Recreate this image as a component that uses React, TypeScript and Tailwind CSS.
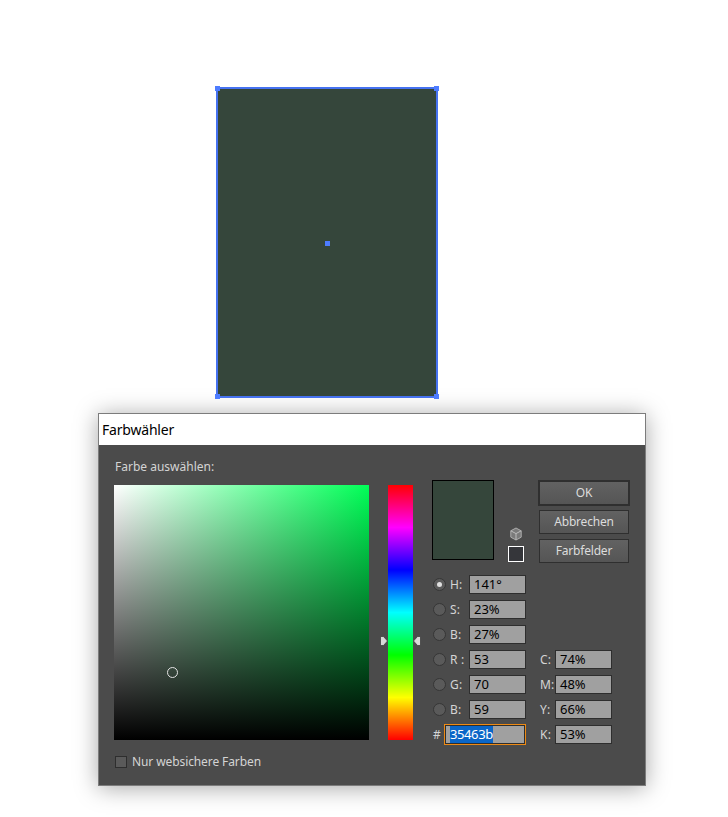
const uiFont = "[font-family:'Noto_Sans',sans-serif]"

function Handle({ className }: { className: string }) {
  return <div className={`absolute w-[5px] h-[5px] bg-[#4d7cff] ${className}`} />
}

function Artboard() {
  return (
    <div className="relative ml-[216px] w-[222px] h-[311px] bg-[#35463b] border-2 border-[#4672f0]">
      <Handle className="-left-[3px] -top-[3px]" />
      <Handle className="-right-[3px] -top-[3px]" />
      <Handle className="-left-[3px] -bottom-[3px]" />
      <Handle className="-right-[3px] -bottom-[3px]" />
      <Handle className="left-[107px] top-[152px]" />
    </div>
  )
}

function Radio({ checked }: { checked?: boolean }) {
  return (
    <div className="flex items-center justify-center w-[13px] h-[13px] rounded-full bg-[#5a5a5a] border border-[#363636]">
      {checked && <div className="w-[5px] h-[5px] rounded-full bg-[#e0e0e0]" />}
    </div>
  )
}

function Field({ value }: { value: string }) {
  return (
    <div className="w-[57px] h-[19px] pl-[4px] bg-[#a0a0a0] border border-[#2e2e2e] text-[13px] leading-[17px] text-black">
      {value}
    </div>
  )
}

function RadioRow({ label, value, checked }: { label: string; value: string; checked?: boolean }) {
  return (
    <div className="flex items-center h-[19px]">
      <div className="w-[18px] flex pl-px">
        <Radio checked={checked} />
      </div>
      <div className="w-[19px] text-[12px] tracking-[0.2px] text-[#d4d4d4] whitespace-pre">{label}</div>
      <Field value={value} />
    </div>
  )
}

function CmykRow({ label, value }: { label: string; value: string }) {
  return (
    <div className="flex items-center h-[19px]">
      <div className="w-[15px] text-[12px] tracking-[0.2px] text-[#d4d4d4]">{label}</div>
      <Field value={value} />
    </div>
  )
}

function HexRow() {
  return (
    <div className="flex items-start h-[21px] -mt-[1px]">
      <div className="w-[13px] pl-px text-[12px] leading-[21px] text-[#d4d4d4]">#</div>
      <div className="shrink-0 w-[82px] h-[21px] p-px bg-[#ee8a14]">
        <div className="h-[19px] pl-[4px] bg-[#a0a0a0] border border-[#2e2e2e]">
          <span className="block w-fit bg-[#0a66c8] text-white text-[13px] tracking-[-0.4px] leading-[17px]">35463b</span>
        </div>
      </div>
    </div>
  )
}

function DialogButton({ label, primary }: { label: string; primary?: boolean }) {
  return (
    <div
      className={`flex items-center justify-center bg-gradient-to-b from-[#626262] to-[#555555] text-[12px] tracking-[-0.2px] text-[#dcdcdc] ${
        primary
          ? 'w-[92px] h-[26px] border-2 border-[#2f2f2f]'
          : 'w-[90px] h-[24px] mx-px border border-[#2f2f2f]'
      }`}
    >
      {label}
    </div>
  )
}

function CubeIcon() {
  return (
    <svg width="12" height="14" viewBox="0 0 12 14" fill="none">
      <path d="M6 1 11.2 3.8V10.2L6 13 .8 10.2V3.8Z" fill="#7a7a7a" stroke="#adadad" />
      <path d="M.8 3.8 6 6.6l5.2-2.8M6 6.6V13" stroke="#bcbcbc" />
    </svg>
  )
}

function ColorField() {
  return (
    <div className="relative w-[255px] h-[255px] bg-[linear-gradient(to_top,#000,rgba(0,0,0,0)),linear-gradient(to_right,#fff,#00ff57)]">
      <div className="absolute left-[53px] top-[182px] w-[11px] h-[11px] rounded-full border border-[#e4e4e4]" />
    </div>
  )
}

function HueBar() {
  return (
    <div className="relative ml-[19px] mt-[40px] w-[25px] h-[255px] bg-[linear-gradient(to_bottom,#f00,#f0f,#00f,#0ff,#0f0,#ff0,#f00)]">
      <svg className="absolute -left-[8px] top-[151px]" width="8" height="10" viewBox="0 0 8 10">
        <path d="M.5.5H3.5L7.5 5 3.5 9.5H.5Z" fill="#d8d8d8" stroke="#333" strokeWidth="0.7" />
      </svg>
      <svg className="absolute -right-[8px] top-[151px]" width="8" height="10" viewBox="0 0 8 10">
        <path d="M7.5.5H4.5L.5 5 4.5 9.5H7.5Z" fill="#d8d8d8" stroke="#333" strokeWidth="0.7" />
      </svg>
    </div>
  )
}

function Controls() {
  return (
    <div className="ml-[19px] mt-[35px] w-[198px]">
      <div className="flex h-[84px]">
        <div className="w-[62px] h-[80px] bg-[#35463b] border border-black" />
        <div className="ml-[14px] w-[16px] mt-[47px] flex flex-col items-center">
          <CubeIcon />
          <div className="mt-[5px] w-[16px] h-[16px] bg-[#35363a] border border-white" />
        </div>
        <div className="ml-[14px] flex flex-col gap-[4px]">
          <DialogButton label="OK" primary />
          <DialogButton label="Abbrechen" />
          <div className="mt-px">
            <DialogButton label="Farbfelder" />
          </div>
        </div>
      </div>
      <div className="mt-[11px] flex">
        <div className="w-[94px] flex flex-col gap-[6px]">
          <RadioRow label="H:" value="141°" checked />
          <RadioRow label="S:" value="23%" />
          <RadioRow label="B:" value="27%" />
          <RadioRow label="R :" value="53" />
          <RadioRow label="G:" value="70" />
          <RadioRow label="B:" value="59" />
          <HexRow />
        </div>
        <div className="ml-[14px] flex flex-col gap-[6px] pt-[75px]">
          <CmykRow label="C:" value="74%" />
          <CmykRow label="M:" value="48%" />
          <CmykRow label="Y:" value="66%" />
          <CmykRow label="K:" value="53%" />
        </div>
      </div>
    </div>
  )
}

function Dialog() {
  return (
    <div className={`ml-[98px] mt-[15px] w-[548px] h-[373px] border border-[#7c7c7c] shadow-[0_2px_22px_rgba(0,0,0,0.35)] ${uiFont}`}>
      <div className="h-[31px] pl-[3px] bg-white text-[14px] tracking-[-0.2px] leading-[31px] text-black">Farbwähler</div>
      <div className="flex h-[340px] pl-[15px] bg-[#4b4b4b]">
        <div className="w-[255px]">
          <div className="h-[40px] pl-px pt-[12px] text-[12px] leading-[20px] text-[#d4d4d4]">
            Farbe auswählen:
          </div>
          <ColorField />
          <div className="flex items-center gap-[5px] mt-[13px] ml-px">
            <div className="w-[12px] h-[12px] bg-[#5a5a5a] border border-[#2e2e2e]" />
            <span className="text-[12px] tracking-[-0.1px] text-[#d4d4d4]">Nur websichere Farben</span>
          </div>
        </div>
        <HueBar />
        <Controls />
      </div>
    </div>
  )
}

export default function App() {
  return (
    <div className="min-h-[817px] pt-[87px] bg-white overflow-hidden">
      <Artboard />
      <Dialog />
    </div>
  )
}
